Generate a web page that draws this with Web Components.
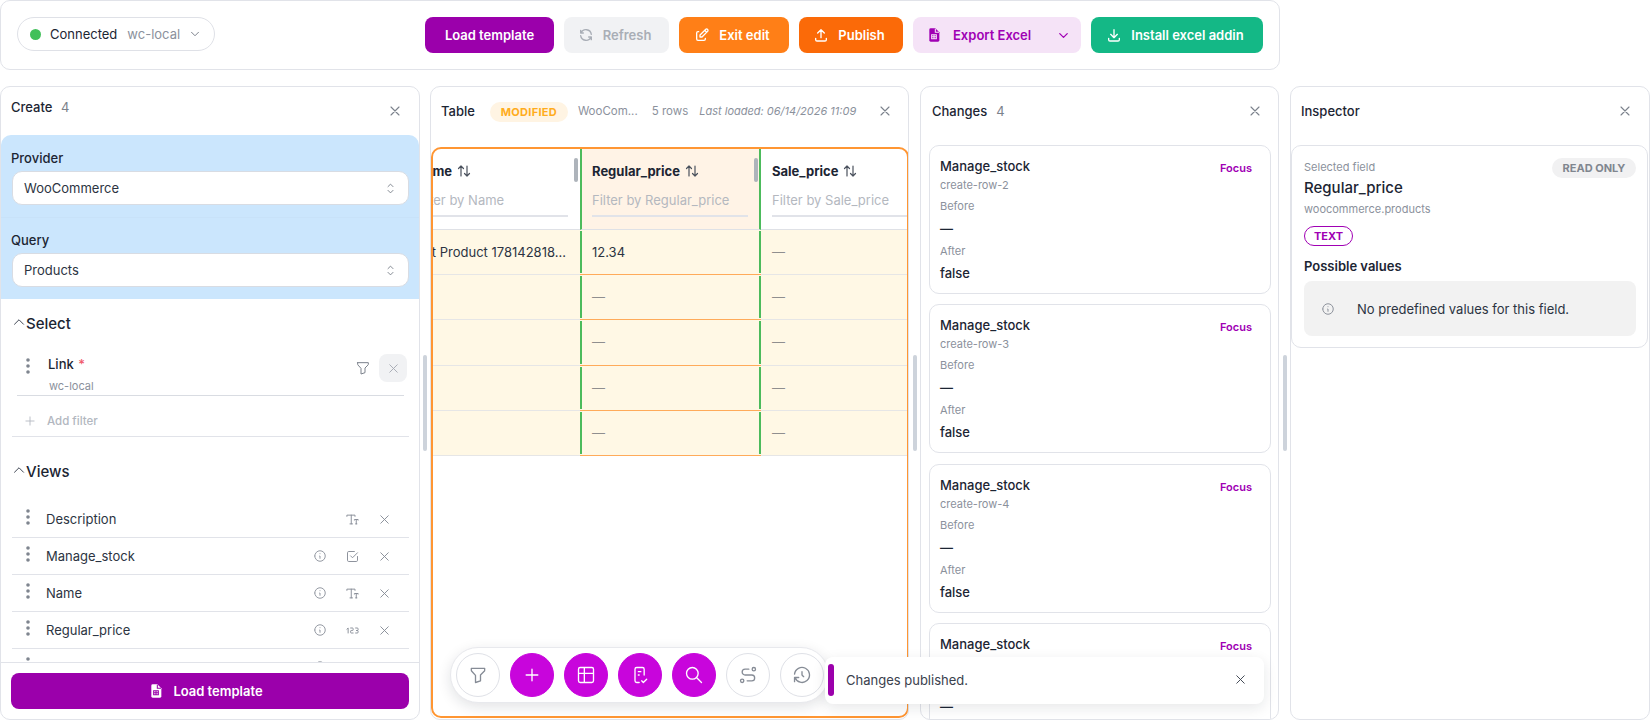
<!DOCTYPE html>
<html lang="en">
<head>
<meta charset="utf-8">
<title>Workbench</title>
<style>
  html, body { margin: 0; height: 720px; overflow: hidden; background: #fff; }
  body { font-family: Inter, "Liberation Sans", sans-serif; font-size: 13px; color: #1c2533; }
</style>
</head>
<body>
<work-bench></work-bench>
<script>
const PATHS = {
  x: 'M18 6l-12 12M6 6l12 12',
  down: 'M6 9l6 6l6 -6',
  up: 'M6 15l6 -6l6 6',
  selector: 'M8 9l4 -4l4 4M16 15l-4 4l-4 -4',
  filter: 'M4 4h16v2.172a2 2 0 0 1 -.586 1.414l-4.414 4.414v7l-6 2v-8.5l-4.48 -4.928a2 2 0 0 1 -.52 -1.345v-2.227z',
  info: 'M3 12a9 9 0 1 0 18 0a9 9 0 0 0 -18 0M12 8h.01M11.500 12h.5v4',
  type: 'M3 7v-2h13v2M10 5v14M12 19h-4M15 13v-1h6v1M18 12v7M17 19h2',
  check: 'M9 11l3 3l8 -8M20 12v6a2 2 0 0 1 -2 2h-12a2 2 0 0 1 -2 -2v-12a2 2 0 0 1 2 -2h9',
  num: 'M3 10l2 -2v8M9 8h3a1 1 0 0 1 1 1v2a1 1 0 0 1 -1 1h-2a1 1 0 0 0 -1 1v2a1 1 0 0 0 1 1h3M17 8h2.5a1.5 1.5 0 0 1 1.5 1.5v1a1.5 1.5 0 0 1 -1.5 1.5h-1.5h1.5a1.5 1.5 0 0 1 1.5 1.5v1a1.5 1.5 0 0 1 -1.5 1.5h-2.5',
  plus: 'M12 5v14M5 12h14',
  refresh: 'M20 11a8.1 8.1 0 0 0 -15.5 -2m-.5 -4v4h4M4 13a8.1 8.1 0 0 0 15.5 2m.5 4v-4h-4',
  edit: 'M7 7h-1a2 2 0 0 0 -2 2v9a2 2 0 0 0 2 2h9a2 2 0 0 0 2 -2v-1M20.385 6.585a2.1 2.1 0 0 0 -2.97 -2.97l-8.415 8.385v3h3l8.385 -8.415zM16 5l3 3',
  upload: 'M4 17v2a2 2 0 0 0 2 2h12a2 2 0 0 0 2 -2v-2M7 9l5 -5l5 5M12 4v12',
  download: 'M4 17v2a2 2 0 0 0 2 2h12a2 2 0 0 0 2 -2v-2M7 11l5 5l5 -5M12 4v12',
  table: 'M3 5a2 2 0 0 1 2 -2h14a2 2 0 0 1 2 2v14a2 2 0 0 1 -2 2h-14a2 2 0 0 1 -2 -2zM3 10h18M10 3v18',
  review: 'M17 12v-7a2 2 0 0 0 -2 -2h-7a2 2 0 0 0 -2 2v14a2 2 0 0 0 2 2h3M10 8h3M10 12h1M14 19l2 2l4 -4',
  search: 'M3 10a7 7 0 1 0 14 0a7 7 0 1 0 -14 0M21 21l-6 -6',
  route: 'M3 19a2 2 0 1 0 4 0a2 2 0 0 0 -4 0M19 7a2 2 0 1 0 0 -4a2 2 0 0 0 0 4zM11 19h5.5a3.5 3.5 0 0 0 0 -7h-8a3.5 3.5 0 0 1 0 -7h4.5',
  history: 'M12 8v4l2 2M3.05 11a9 9 0 1 1 .5 4m-.5 5v-5h5'
};

function icon(name, size = 16, weight = 2) {
  return `<svg width="${size}" height="${size}" viewBox="0 0 24 24" fill="none" stroke="currentColor" stroke-width="${weight}" stroke-linecap="round" stroke-linejoin="round" style="display:block;flex:none"><path d="${PATHS[name]}"/></svg>`;
}

function sheetIcon(size, cut) {
  return `<svg width="${size}" height="${size}" viewBox="0 0 24 24" style="display:block;flex:none"><path fill="currentColor" d="M7 2h7l6 6v12a2 2 0 0 1 -2 2H7a2 2 0 0 1 -2 -2V4a2 2 0 0 1 2 -2z"/><path fill="none" stroke="${cut}" stroke-width="1.6" d="M8.5 11.5h7v6h-7zM8.5 14.5h7M12 11.5v6M14 2.5V8h5.500"/></svg>`;
}

const DOTS = `<svg width="4" height="16" viewBox="0 0 4 16" style="display:block;flex:none"><g fill="#7f858f"><circle cx="2" cy="2" r="1.8"/><circle cx="2" cy="8" r="1.8"/><circle cx="2" cy="14" r="1.8"/></g></svg>`;

class UiButton extends HTMLElement {
  constructor() {
    super();
    this.attachShadow({ mode: 'open' });
    const name = this.getAttribute('icon');
    const art = name === 'sheet' ? sheetIcon(16, this.getAttribute('cut') || '#fff') : name ? icon(name, 16) : '';
    this.shadowRoot.innerHTML = `
      <style>
        :host {
          display: inline-flex;
          align-items: center;
          justify-content: center;
          gap: 9px;
          box-sizing: border-box;
          height: 36px;
          padding-right: ${name ? 4 : 0}px;
          flex: none;
          border-radius: 8px;
          font-size: 13px;
          font-weight: 600;
          color: #fff;
          background: #9b00ab;
          cursor: pointer;
        }
      </style>
      ${art}<slot></slot>
    `;
  }
}
customElements.define('ui-button', UiButton);

class ConnectionPill extends HTMLElement {
  constructor() {
    super();
    this.attachShadow({ mode: 'open' });
    this.shadowRoot.innerHTML = `
      <style>
        :host {
          display: inline-flex;
          align-items: center;
          box-sizing: border-box;
          width: 198px;
          height: 34px;
          padding-left: 12px;
          border: 1px solid #dfe1e7;
          border-radius: 17px;
          font-size: 13px;
          color: #1c2533;
        }
        i { width: 11px; height: 11px; border-radius: 50%; background: #41c05a; margin-right: 9px; }
        span { color: #8b919c; margin: 0 8px 0 10px; }
        b { color: #7c828c; font-weight: 400; }
      </style>
      <i></i>Connected<span>wc-local</span><b>${icon('down', 14, 1.7)}</b>
    `;
  }
}
customElements.define('connection-pill', ConnectionPill);

class TopBar extends HTMLElement {
  constructor() {
    super();
    this.attachShadow({ mode: 'open' });
    this.shadowRoot.innerHTML = `
      <style>
        :host {
          display: flex;
          align-items: flex-start;
          gap: 10px;
          box-sizing: border-box;
          width: 1280px;
          height: 70px;
          padding: 16px 16px 0 16px;
          border: 1px solid #e1e3e9;
          border-radius: 10px;
          background: #fff;
        }
        connection-pill { margin-right: auto; }
        .split {
          display: flex;
          align-items: center;
          box-sizing: border-box;
          width: 168px;
          height: 36px;
          padding: 0 10px 0 13px;
          border-radius: 8px;
          background: #f5e3f7;
          color: #a000b4;
          font-size: 13px;
          font-weight: 600;
        }
        .split span { margin: 0 auto 0 11px; }
      </style>
      <connection-pill></connection-pill>
      <ui-button style="width:129px">Load template</ui-button>
      <ui-button icon="refresh" style="width:105px;background:#f1f2f4;color:#a9aeb6">Refresh</ui-button>
      <ui-button icon="edit" style="width:110px;background:#ff7f17">Exit edit</ui-button>
      <ui-button icon="upload" style="width:104px;background:#fb6a08">Publish</ui-button>
      <div class="split">${sheetIcon(16, '#f5e3f7')}<span>Export Excel</span>${icon('down', 15)}</div>
      <ui-button icon="download" style="width:172px;background:#14b886">Install excel addin</ui-button>
    `;
  }
}
customElements.define('top-bar', TopBar);

class SidePanel extends HTMLElement {
  constructor() {
    super();
    this.attachShadow({ mode: 'open' });
    this.shadowRoot.innerHTML = `
      <style>
        :host {
          display: flex;
          flex-direction: column;
          box-sizing: border-box;
          height: 634px;
          flex: none;
          overflow: hidden;
          background: #fff;
          border: 1px solid #e1e3e9;
          border-radius: 10px;
        }
        header {
          display: flex;
          align-items: center;
          flex: none;
          height: 48px;
          padding: 0 var(--head-right, 16px) 0 var(--head-left, 10px);
          gap: 9px;
          color: #7c828c;
        }
        .title { font-size: 13px; font-weight: 500; color: #1c2533; }
        .close { margin-left: auto; color: #7c828c; }
        main { flex: 1; min-height: 0; display: flex; flex-direction: column; }
      </style>
      <header>
        <span class="title"><slot name="title"></slot></span>
        <slot name="meta"></slot>
        <span class="close">${icon('x', 16, 1.7)}</span>
      </header>
      <main><slot></slot></main>
    `;
  }
}
customElements.define('side-panel', SidePanel);

class PickField extends HTMLElement {
  constructor() {
    super();
    this.attachShadow({ mode: 'open' });
    this.shadowRoot.innerHTML = `
      <style>
        :host { display: block; padding: 15px 10px 12px 11px; }
        label { display: block; font-size: 13px; line-height: 16px; font-weight: 500; margin: 0 0 5px -1px; color: #1c2533; }
        div {
          display: flex;
          align-items: center;
          justify-content: space-between;
          box-sizing: border-box;
          height: 34px;
          padding: 0 10px 0 11px;
          background: #fff;
          border: 1px solid #d8dce3;
          border-radius: 10px;
          font-size: 13px;
          color: #2c3442;
        }
        span { color: #7c828c; }
      </style>
      <label>${this.getAttribute('label')}</label>
      <div>${this.getAttribute('value')}<span>${icon('selector', 15, 1.5)}</span></div>
    `;
  }
}
customElements.define('pick-field', PickField);

class FoldHead extends HTMLElement {
  constructor() {
    super();
    this.attachShadow({ mode: 'open' });
    this.shadowRoot.innerHTML = `
      <style>
        :host {
          display: flex;
          align-items: center;
          height: 20px;
          padding-left: 9px;
          font-size: 15px;
          font-weight: 500;
          color: #1c2533;
        }
        span { color: #3c4350; margin: -3px -2px 0 0; }
      </style>
      <span>${icon('up', 18, 1.3)}</span><slot></slot>
    `;
  }
}
customElements.define('fold-head', FoldHead);

class ViewRow extends HTMLElement {
  constructor() {
    super();
    this.attachShadow({ mode: 'open' });
    const kind = this.getAttribute('kind');
    const tip = this.hasAttribute('tip') ? icon('info', 14, 1.5) : '';
    this.shadowRoot.innerHTML = `
      <style>
        :host {
          display: flex;
          align-items: center;
          flex: none;
          box-sizing: border-box;
          height: 37px;
          margin: 0 10px 0 11px;
          padding: 0 9px 0 14px;
          border-bottom: 1px solid #e1e3e9;
          font-size: 13px;
          color: #2c3442;
        }
        .dots { margin: -5px 16px 0 0; }
        .slot { width: 32px; display: flex; justify-content: center; color: #868c96; }
        .name { margin-right: auto; }
      </style>
      <span class="dots">${DOTS}</span>
      <span class="name"><slot></slot></span>
      <span class="slot">${tip}</span>
      <span class="slot">${icon(kind, 15, 1.5)}</span>
      <span class="slot">${icon('x', 15, 1.5)}</span>
    `;
  }
}
customElements.define('view-row', ViewRow);

class CreatePanel extends HTMLElement {
  constructor() {
    super();
    this.attachShadow({ mode: 'open' });
    this.shadowRoot.innerHTML = `
      <style>
        :host { display: block; flex: none; width: 420px; margin-right: -1px; }
        side-panel { width: 100%; }
        .head { display: inline-block; padding-bottom: 9px; }
        .count { color: #7c828c; font-weight: 400; margin-left: 5px; }
        .scroll { flex: 1; min-height: 0; overflow: hidden; }
        .source { background: #cbe6fd; border-radius: 10px 10px 0 0; }
        .source pick-field:first-child { border-bottom: 1px solid #c8e2f9; }
        .source pick-field:last-child { padding-top: 14px; }
        .select { padding-top: 14px; }
        .link {
          display: flex;
          box-sizing: border-box;
          height: 42px;
          margin: 21px 15px 0 16px;
          padding-left: 9px;
          border-bottom: 1px solid #d9dce2;
        }
        .dots { margin: 4px 18px 0 0; }
        .label { padding-top: 2px; line-height: 16px; font-weight: 500; color: #1c2533; }
        .label em { color: #f0596b; font-style: normal; margin-left: 1px; }
        .label small { display: block; margin: 7px 0 0 1px; font-size: 11px; line-height: 14px; font-weight: 400; color: #8b919c; }
        .filter { margin: 6px 8px 0 auto; color: #7c828c; }
        .drop {
          display: flex;
          align-items: center;
          justify-content: center;
          width: 28px;
          height: 28px;
          margin-right: -3px;
          border-radius: 8px;
          background: #f1f2f4;
          color: #a5aab3;
        }
        .add {
          display: flex;
          align-items: center;
          gap: 10px;
          box-sizing: border-box;
          height: 41px;
          margin: 0 10px 0 11px;
          padding: 10px 0 0 11px;
          border-bottom: 1px solid #e1e3e9;
          font-size: 11.5px;
          font-weight: 500;
          color: #b2b7c0;
        }
        .views { margin: 24px 0 20px; }
        footer { flex: none; padding: 10px 10px 10px 10px; border-top: 1px solid #e1e3e9; }
        footer ui-button { width: 100%; }
      </style>
      <side-panel>
        <span slot="title"><span class="head">Create<span class="count"> 4</span></span></span>
        <div class="scroll">
          <div class="source">
            <pick-field label="Provider" value="WooCommerce"></pick-field>
            <pick-field label="Query" value="Products"></pick-field>
          </div>
          <div class="select">
            <fold-head>Select</fold-head>
            <div class="link">
              <span class="dots">${DOTS}</span>
              <div class="label">Link <em>*</em><small>wc-local</small></div>
              <span class="filter">${icon('filter', 16, 1.5)}</span>
              <span class="drop">${icon('x', 15, 1.5)}</span>
            </div>
            <div class="add">${icon('plus', 14, 1.5)}Add filter</div>
          </div>
          <fold-head class="views">Views</fold-head>
          <view-row kind="type">Description</view-row>
          <view-row kind="check" tip>Manage_stock</view-row>
          <view-row kind="type" tip>Name</view-row>
          <view-row kind="num" tip>Regular_price</view-row>
          <view-row kind="num" tip></view-row>
        </div>
        <footer><ui-button icon="sheet" cut="#9b00ab" style="padding-right:9px">Load template</ui-button></footer>
      </side-panel>
    `;
  }
}
customElements.define('create-panel', CreatePanel);

class DataGrid extends HTMLElement {
  constructor() {
    super();
    this.attachShadow({ mode: 'open' });
    this.shadowRoot.innerHTML = `
      <style>
        :host {
          display: block;
          box-sizing: border-box;
          height: 571px;
          margin: 12px -1px 0 0;
          overflow: hidden;
          border: 2px solid #ff9633;
          border-radius: 10px;
          background: #fff;
        }
        .grid { display: grid; grid-template-columns: 147px 181px 1fr; }
        .th {
          position: relative;
          box-sizing: border-box;
          height: 81px;
          padding: 14px 0 0 11px;
          overflow: hidden;
          white-space: nowrap;
          border-bottom: 1px solid #dfe1e6;
        }
        .th b { display: flex; align-items: center; gap: 5px; height: 16px; font-size: 13px; font-weight: 700; color: #1c2533; }
        .th p {
          box-sizing: border-box;
          height: 33px;
          margin: 5px 0 0;
          padding-top: 8px;
          border-bottom: 2px solid #e1e3e9;
          font-size: 13px;
          line-height: 16px;
          color: #b4b8bf;
        }
        .td {
          position: relative;
          box-sizing: border-box;
          display: flex;
          align-items: center;
          height: 45.2px;
          padding-left: 11px;
          overflow: hidden;
          white-space: nowrap;
          background: #fff8e5;
          border-bottom: 1px solid #e6e6e6;
          font-size: 13px;
          color: #2c3442;
        }
        .dash { color: #8f8f8f; }
        .th.first { padding-left: 0; }
        .th.first b, .th.first p { margin-left: -18px; }
        .th.first p { width: 153px; }
        .td.first { padding-left: 0; }
        .td.first span { margin-left: -23px; }
        .th.picked { padding-left: 10px; background: #fff3e6; border-left: 2px solid #4cbb5c; border-right: 2px solid #4cbb5c; }
        .th.picked p { margin-right: 11px; }
        .td.picked { padding-left: 12px; border-bottom: 1px solid #ffab5a; }
        .td.picked::before, .td.picked::after {
          content: '';
          position: absolute;
          top: 1px;
          bottom: 1px;
          width: 2px;
          background: #4cbb5c;
        }
        .td.picked::before { left: 0; }
        .td.picked::after { right: 0; }
        .grip { position: absolute; top: 9px; right: 2px; width: 4px; height: 24px; border-radius: 2px; background: #aeb4bb; }
        .th.picked .grip { right: 1px; }
        svg { color: #4a515d; }
      </style>
      <div class="grid"></div>
    `;
    this.columns = [];
    this.rows = [];
  }

  setData(columns, rows) {
    this.columns = columns;
    this.rows = rows;
    this.renderGrid();
  }

  renderGrid() {
    const grid = this.shadowRoot.querySelector('.grid');
    const sort = `<svg width="14" height="14" viewBox="0 0 14 14" fill="none" stroke="currentColor" stroke-width="1.2" stroke-linecap="round" stroke-linejoin="round"><path d="M4 12V2M1.500 4.500L4 2l2.500 2.500M10 2v10M7.500 9.500L10 12l2.500-2.500"/></svg>`;
    let html = '';
    this.columns.forEach(col => {
      const grip = col.grip ? '<span class="grip"></span>' : '';
      html += `<div class="th ${col.cls}"><b>${col.name} ${sort}</b><p>Filter by ${col.name}</p>${grip}</div>`;
    });
    this.rows.forEach(row => {
      row.forEach((value, i) => {
        const text = value === '' ? '' : `<span class="${value === '—' ? 'dash' : ''}">${value}</span>`;
        html += `<div class="td ${this.columns[i].cls}">${text}</div>`;
      });
    });
    grid.innerHTML = html;
  }
}
customElements.define('data-grid', DataGrid);

class TablePanel extends HTMLElement {
  constructor() {
    super();
    this.attachShadow({ mode: 'open' });
    this.shadowRoot.innerHTML = `
      <style>
        :host { display: block; flex: none; width: 479px; }
        side-panel { width: 100%; --head-right: 15px; }
        .meta { display: flex; align-items: center; font-size: 11.5px; color: #8b919c; white-space: nowrap; }
        .badge {
          box-sizing: border-box;
          width: 78px;
          height: 20px;
          margin: 2px 10px 0 6px;
          border-radius: 10px;
          background: #fff4e3;
          color: #ffac1c;
          font-size: 11px;
          line-height: 20px;
          font-weight: 700;
          letter-spacing: .3px;
          text-align: center;
        }
        .rows { margin: 0 11px 0 14px; }
        em { font-size: 11px; }
      </style>
      <side-panel>
        <span slot="title">Table</span>
        <div slot="meta" class="meta"><span class="badge">MODIFIED</span>WooCom...<span class="rows">5 rows</span><em>Last loaded: 06/14/2026 11:09</em></div>
        <data-grid></data-grid>
      </side-panel>
    `;
    const dash = '—';
    this.shadowRoot.querySelector('data-grid').setData(
      [
        { name: 'Name', cls: 'first', grip: true },
        { name: 'Regular_price', cls: 'picked', grip: true },
        { name: 'Sale_price', cls: 'last' }
      ],
      [
        ['Test Product 178142818...', '12.34', dash],
        ['', dash, dash],
        ['', dash, dash],
        ['', dash, dash],
        ['', dash, dash]
      ]
    );
  }
}
customElements.define('table-panel', TablePanel);

class ChangeCard extends HTMLElement {
  constructor() {
    super();
    this.attachShadow({ mode: 'open' });
    this.shadowRoot.innerHTML = `
      <style>
        :host {
          display: block;
          flex: none;
          box-sizing: border-box;
          height: 149px;
          padding: 12px 10px 0;
          border: 1px solid #e1e3e9;
          border-radius: 10px;
          background: #fff;
        }
        h4 { margin: 0; font-size: 13px; line-height: 16px; font-weight: 500; color: #1c2533; }
        .focus { float: right; margin: 2px 8px 0 0; font-size: 11px; line-height: 16px; font-weight: 600; color: #a000b4; }
        small { display: block; font-size: 11px; line-height: 14px; color: #8b919c; }
        .sub { margin-top: 4px; }
        .tag { margin-top: 7px; }
        .val { margin-top: 7px; font-size: 13px; line-height: 16px; font-weight: 500; color: #1c2533; }
        .val + .tag { margin-top: 8px; }
      </style>
      <span class="focus">Focus</span>
      <h4>${this.getAttribute('field')}</h4>
      <small class="sub">${this.getAttribute('row')}</small>
      <small class="tag">Before</small>
      <div class="val">—</div>
      <small class="tag">After</small>
      <div class="val">false</div>
    `;
  }
}
customElements.define('change-card', ChangeCard);

class ChangesPanel extends HTMLElement {
  constructor() {
    super();
    this.attachShadow({ mode: 'open' });
    this.shadowRoot.innerHTML = `
      <style>
        :host { display: block; flex: none; width: 359px; }
        side-panel { width: 100%; --head-left: 11px; --head-right: 15px; }
        .count { font-size: 13px; }
        .list { display: flex; flex-direction: column; gap: 10.3px; margin-top: 10px; padding: 0 7px 0 8px; overflow: hidden; }
      </style>
      <side-panel>
        <span slot="title">Changes</span>
        <span slot="meta" class="count">4</span>
        <div class="list">
          <change-card field="Manage_stock" row="create-row-2"></change-card>
          <change-card field="Manage_stock" row="create-row-3"></change-card>
          <change-card field="Manage_stock" row="create-row-4"></change-card>
          <change-card field="Manage_stock" row="create-row-5"></change-card>
        </div>
      </side-panel>
    `;
  }
}
customElements.define('changes-panel', ChangesPanel);

class InspectorPanel extends HTMLElement {
  constructor() {
    super();
    this.attachShadow({ mode: 'open' });
    this.shadowRoot.innerHTML = `
      <style>
        :host { display: block; flex: none; width: 360px; }
        side-panel { width: 100%; }
        .card {
          position: relative;
          box-sizing: border-box;
          height: 203px;
          margin: 10px 1px 0 0;
          padding: 14px 11px 0 12px;
          border: 1px solid #e1e3e9;
          border-radius: 10px;
        }
        small { display: block; font-size: 11px; line-height: 14px; color: #8b919c; }
        h3 { margin: 3px 0 3px; font-size: 15px; line-height: 22px; font-weight: 500; color: #1c2533; }
        .ro {
          position: absolute;
          top: 12px;
          right: 11px;
          width: 84px;
          height: 20px;
          border-radius: 10px;
          background: #f1f1f2;
          color: #80868f;
          font-size: 11px;
          line-height: 20px;
          font-weight: 700;
          text-align: center;
        }
        .chip {
          box-sizing: border-box;
          width: 49px;
          height: 20px;
          margin-top: 10px;
          border: 1px solid #a000b4;
          border-radius: 10px;
          color: #a000b4;
          font-size: 11px;
          line-height: 18px;
          font-weight: 700;
          text-align: center;
        }
        h5 { margin: 12px 0 7px; font-size: 13px; line-height: 16px; font-weight: 600; color: #1c2533; }
        .none {
          display: flex;
          align-items: center;
          gap: 22px;
          box-sizing: border-box;
          height: 55px;
          padding-left: 17px;
          border-radius: 8px;
          background: #f2f2f2;
          font-size: 13px;
          color: #2c3442;
        }
        .none span { color: #868c96; }
      </style>
      <side-panel>
        <span slot="title">Inspector</span>
        <div class="card">
          <span class="ro">READ ONLY</span>
          <small>Selected field</small>
          <h3>Regular_price</h3>
          <small>woocommerce.products</small>
          <div class="chip">TEXT</div>
          <h5>Possible values</h5>
          <div class="none"><span>${icon('info', 14, 1.6)}</span>No predefined values for this field.</div>
        </div>
      </side-panel>
    `;
  }
}
customElements.define('inspector-panel', InspectorPanel);

class ResizeGutter extends HTMLElement {
  constructor() {
    super();
    this.attachShadow({ mode: 'open' });
    this.shadowRoot.innerHTML = `
      <style>
        :host { display: flex; justify-content: center; flex: none; width: 11px; }
        i { width: 4px; height: 96px; margin-top: 269px; border-radius: 2px; background: #cdd3db; }
      </style>
      <i></i>
    `;
  }
}
customElements.define('resize-gutter', ResizeGutter);

class FloatDock extends HTMLElement {
  constructor() {
    super();
    this.attachShadow({ mode: 'open' });
    const items = [
      ['filter', false], ['plus', true], ['table', true], ['review', true],
      ['search', true], ['route', false], ['history', false]
    ];
    const buttons = items.map(([name, on]) => `<button class="${on ? 'on' : ''}">${icon(name, 20, 1.6)}</button>`).join('');
    this.shadowRoot.innerHTML = `
      <style>
        :host {
          position: absolute;
          left: 450px;
          top: 647px;
          display: flex;
          gap: 10px;
          box-sizing: border-box;
          width: 379px;
          height: 56px;
          padding: 5px 0 0 5px;
          background: #fff;
          border: 1px solid #e8e9ed;
          border-radius: 28px;
          box-shadow: 0 4px 14px rgba(20, 25, 40, .12);
        }
        button {
          display: flex;
          align-items: center;
          justify-content: center;
          width: 44px;
          height: 44px;
          padding: 0;
          border: 1px solid #dfe1e7;
          border-radius: 50%;
          background: #fff;
          color: #868c96;
        }
        button.on { background: #c805dc; border-color: #c805dc; color: #fff; }
      </style>
      ${buttons}
    `;
  }
}
customElements.define('float-dock', FloatDock);

class ToastNote extends HTMLElement {
  constructor() {
    super();
    this.attachShadow({ mode: 'open' });
    this.shadowRoot.innerHTML = `
      <style>
        :host {
          position: absolute;
          left: 825px;
          top: 657px;
          display: flex;
          align-items: center;
          box-sizing: border-box;
          width: 439px;
          height: 47px;
          padding: 0 16px 2px 3px;
          background: #fff;
          border-radius: 8px;
          box-shadow: 0 4px 14px rgba(20, 25, 40, .1);
          font-size: 13px;
          color: #3a414d;
        }
        i { width: 6px; height: 32px; margin: 0 12px 0 0; border-radius: 3px; background: #9b00ab; }
        span { margin-left: auto; color: #3a414d; }
      </style>
      <i></i><slot></slot><span>${icon('x', 15, 1.5)}</span>
    `;
  }
}
customElements.define('toast-note', ToastNote);

class WorkBench extends HTMLElement {
  constructor() {
    super();
    this.attachShadow({ mode: 'open' });
    this.shadowRoot.innerHTML = `
      <style>
        :host { display: block; position: relative; width: 1650px; height: 720px; overflow: hidden; }
        .panels { display: flex; margin-top: 16px; }
      </style>
      <top-bar></top-bar>
      <div class="panels">
        <create-panel></create-panel>
        <resize-gutter></resize-gutter>
        <table-panel></table-panel>
        <resize-gutter></resize-gutter>
        <changes-panel></changes-panel>
        <resize-gutter></resize-gutter>
        <inspector-panel></inspector-panel>
      </div>
      <float-dock></float-dock>
      <toast-note>Changes published.</toast-note>
    `;
  }
}
customElements.define('work-bench', WorkBench);
</script>
</body>
</html>
